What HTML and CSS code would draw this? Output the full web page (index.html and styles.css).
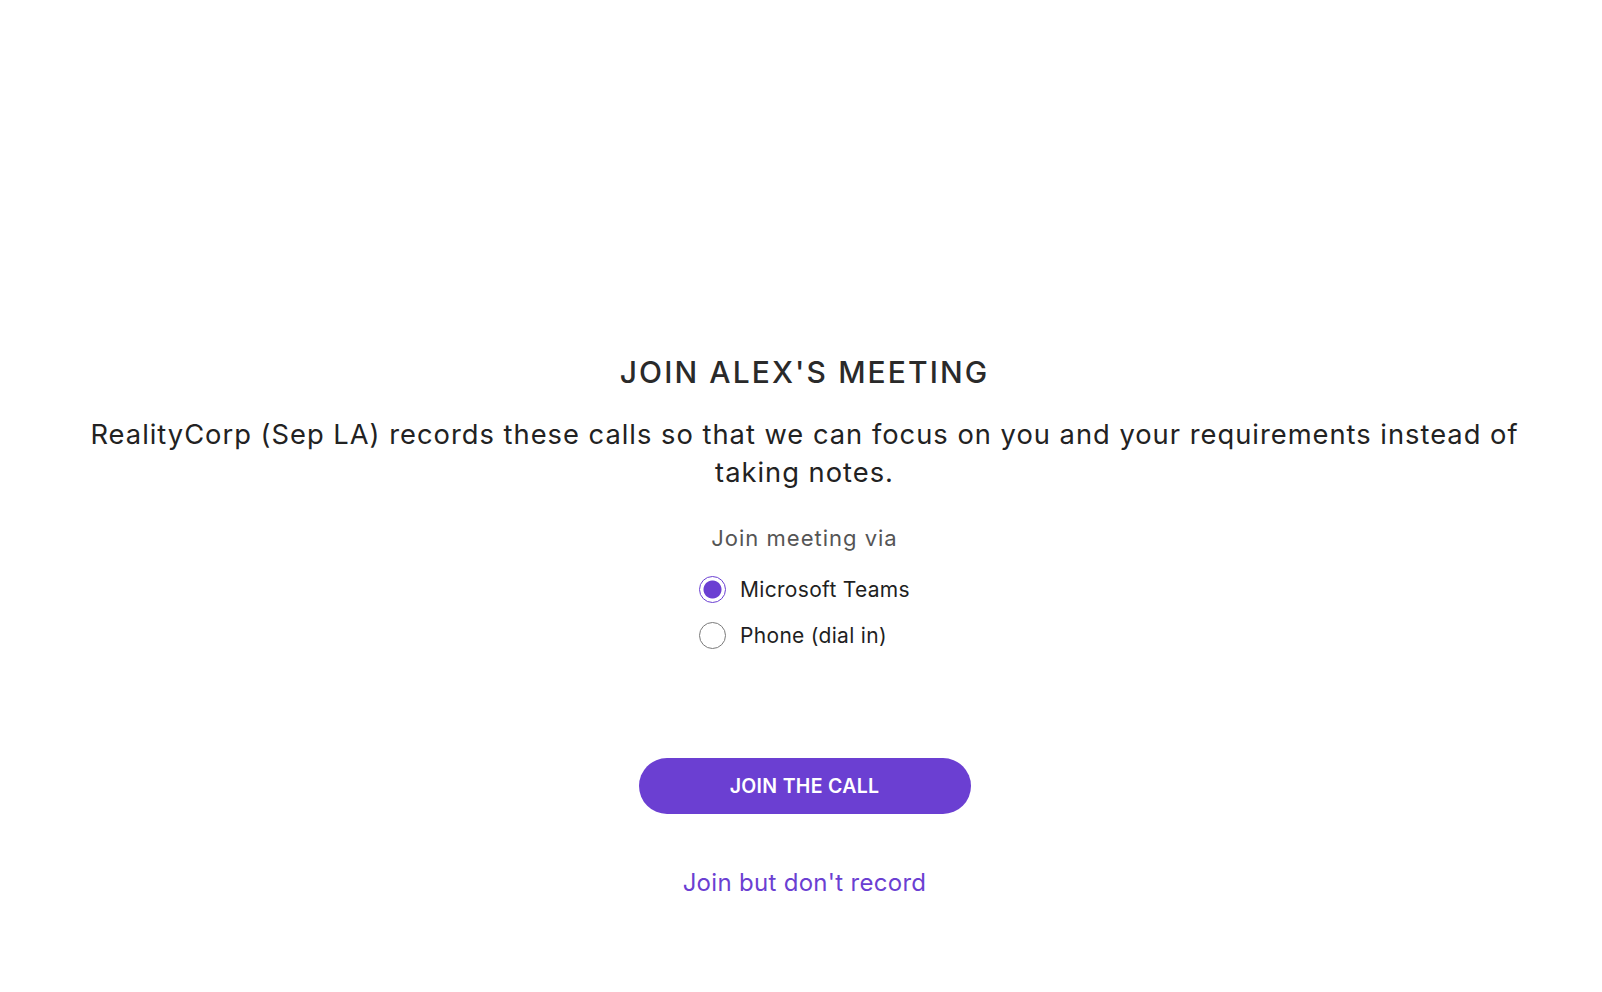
FILE: index.html
```html
<!DOCTYPE html>
<html lang="en">
<head>
<meta charset="utf-8">
<title>Join Alex's Meeting</title>
<link rel="stylesheet" href="styles.css">
</head>
<body>
<main class="page">
  <h1 class="title">JOIN ALEX'S MEETING</h1>
  <p class="intro">RealityCorp (Sep LA) records these calls so that we can focus on you and your requirements instead of taking notes.</p>
  <div class="via">Join meeting via</div>
  <div class="options">
    <label class="option">
      <input type="radio" name="via" checked>
      <span class="radio"></span>
      <span class="label">Microsoft Teams</span>
    </label>
    <label class="option">
      <input type="radio" name="via">
      <span class="radio"></span>
      <span class="label">Phone (dial in)</span>
    </label>
  </div>
  <button class="join">JOIN THE CALL</button>
  <a class="norecord" href="#">Join but don't record</a>
</main>
</body>
</html>
```
FILE: styles.css
```css
html, body {
  margin: 0;
  padding: 0;
  background: #ffffff;
}
body {
  font-family: Inter, "Noto Sans", "Liberation Sans", sans-serif;
  color: #222222;
}
.page {
  display: flex;
  flex-direction: column;
  align-items: center;
  padding: 350px 60px 0 67px;
}
.title {
  margin: 0;
  font-size: 30px;
  font-weight: 500;
  letter-spacing: 2.1px;
  color: #2a2a2a;
  line-height: 44px;
}
.intro {
  margin: 22px 0 0;
  font-size: 27.3px;
  line-height: 38px;
  letter-spacing: 1px;
  text-align: center;
  color: #222222;
  max-width: 1460px;
}
.via {
  margin-top: 31px;
  font-size: 22px;
  letter-spacing: 1px;
  color: #555555;
  line-height: 30px;
}
.options {
  margin-top: 23px;
  display: flex;
  flex-direction: column;
  gap: 19px;
}
.option {
  display: flex;
  align-items: center;
  gap: 14px;
  cursor: pointer;
}
.option input {
  display: none;
}
.radio {
  width: 25px;
  height: 25px;
  border-radius: 50%;
  border: 1px solid #7a7a7a;
  box-sizing: content-box;
  flex: none;
  background: #fff;
}
.option input:checked + .radio {
  border-color: #6b3fd2;
  background: radial-gradient(circle, #6b3fd2 0 8.5px, #ffffff 9.5px);
}
.label {
  font-size: 21px;
  letter-spacing: 0.3px;
  color: #1f1f1f;
  line-height: 27px;
}
.join {
  margin-top: 109px;
  width: 332px;
  height: 56px;
  border: none;
  border-radius: 28px;
  background: #6b3fd2;
  color: #ffffff;
  font-family: Inter, "Noto Sans", "Liberation Sans", sans-serif;
  font-size: 19.5px;
  font-weight: 600;
  letter-spacing: 0.3px;
  cursor: pointer;
}
.norecord {
  margin-top: 53px;
  font-size: 24px;
  letter-spacing: 0.3px;
  color: #6b3fd2;
  text-decoration: none;
  line-height: 32px;
}
```
